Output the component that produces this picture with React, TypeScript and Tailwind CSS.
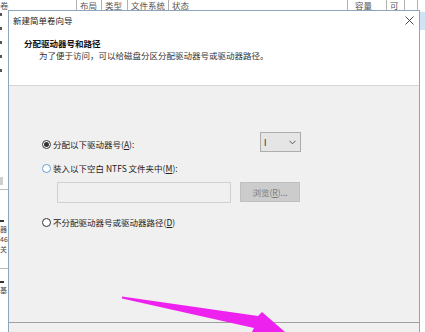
import React from "react";

const font = { fontFamily: '"Noto Sans CJK SC", "Noto Sans", sans-serif' };

function Radio({ checked, blue }: { checked?: boolean; blue?: boolean }) {
  return (
    <span
      className={`flex h-[9px] w-[9px] shrink-0 items-center justify-center rounded-full border bg-white ${
        blue ? "border-[#5ea0d8]" : "border-[#333333]"
      }`}
    >
      {checked && <span className="h-[5px] w-[5px] rounded-full bg-[#333333]" />}
    </span>
  );
}

function HeaderCell({ w, children, last }: { w: string; children?: React.ReactNode; last?: boolean }) {
  return (
    <div className={`${w} flex h-full shrink-0 items-center ${last ? "" : "border-r border-[#b0b0b0]"} pl-[3px] overflow-hidden whitespace-nowrap`}>
      {children}
    </div>
  );
}

export default function App() {
  return (
    <div
      className="relative flex h-[332px] w-[425px] flex-col overflow-hidden bg-white text-[8.5px] leading-[12px] text-[#222]"
      style={font}
    >
      {/* Underlying column header row */}
      <div className="flex h-[10px] shrink-0 bg-white text-[8.5px] leading-[10px] text-[#555]">
        <HeaderCell w="w-[77px]">
          <span className="-ml-[3px]">卷</span>
        </HeaderCell>
        <HeaderCell w="w-[25px]">布局</HeaderCell>
        <HeaderCell w="w-[26px]">类型</HeaderCell>
        <HeaderCell w="w-[41px]">文件系统</HeaderCell>
        <HeaderCell w="w-[179px]">状态</HeaderCell>
        <HeaderCell w="w-[39px]">
          <span className="pl-[4px]">容量</span>
        </HeaderCell>
        <HeaderCell w="w-[18px]">可</HeaderCell>
        <HeaderCell w="w-[13px]"></HeaderCell>
        <HeaderCell w="w-[7px]" last></HeaderCell>
      </div>

      <div className="flex min-h-0 flex-1">
        {/* left strip of underlying window */}
        <div className="flex w-[8px] shrink-0 flex-col bg-white text-[7px] leading-[10px] text-[#444]">
          <div className="mt-[3px] h-[3px] w-[2px] bg-[#555]" />
          <div className="mt-[11px] h-[3px] w-[2px] bg-[#555]" />
          <div className="mt-[11px] h-[3px] w-[2px] bg-[#555]" />
          <div className="mt-[11px] h-[3px] w-[2px] bg-[#555]" />
          <div className="mt-[11px] h-[3px] w-[2px] bg-[#555]" />
          <div className="mt-[105px] h-[8px] w-[3px] bg-[#cfcfcf]" />
          <div className="mt-[4px] h-px w-full bg-[#bbb]" />
          <div className="mt-[30px] h-[2px] w-[4px] bg-[#333]" />
          <div className="mt-[2px] overflow-hidden whitespace-nowrap">器</div>
          <div className="overflow-hidden whitespace-nowrap">46</div>
          <div className="overflow-hidden whitespace-nowrap">关</div>
          <div className="mt-[14px] h-px w-full bg-[#bbb]" />
          <div className="mt-[12px] h-[2px] w-[4px] bg-[#333]" />
          <div className="mt-[2px] overflow-hidden whitespace-nowrap">基</div>
        </div>

        {/* Dialog */}
        <div className="flex h-[340px] w-[412px] shrink-0 flex-col border border-[#8ea6bd] bg-[#f0f0f0]">
          {/* white header */}
          <div className="flex h-[75px] shrink-0 flex-col border-b border-[#d5d5d5] bg-white">
            <div className="flex h-[12px] items-center pl-[4px] pr-[5px] mt-[3px]">
              <span className="flex-1">新建简单卷向导</span>
              <svg width="9" height="9" viewBox="0 0 9 9" className="mr-[0px]">
                <path d="M0.5 0.5 L8.5 8.5 M8.5 0.5 L0.5 8.5" stroke="#333" strokeWidth="0.9" />
              </svg>
            </div>
            <div className="mt-[11px] pl-[15px] font-bold text-[#111]">分配驱动器号和路径</div>
            <div className="pl-[30px] text-[#333]">为了便于访问，可以给磁盘分区分配驱动器号或驱动器路径。</div>
          </div>

          {/* body */}
          <div className="flex h-[237px] shrink-0 flex-col border-b border-[#a0a0a0] pl-[33px]">
            <div className="mt-[46px] flex h-[20px] items-start">
              <div className="flex w-[218px] items-center gap-[2px] pt-[6px]">
                <Radio checked />
                <span>
                  分配以下驱动器号(<span className="underline">A</span>):
                </span>
              </div>
              <div className="flex h-[20px] w-[41px] items-center border border-[#adadad] bg-[#e5e5e5] pl-[3px] pr-[4px]">
                <span className="flex-1">I</span>
                <svg width="7" height="5" viewBox="0 0 7 5">
                  <path d="M0.5 0.8 L3.5 3.8 L6.5 0.8" stroke="#444" strokeWidth="0.9" fill="none" />
                </svg>
              </div>
            </div>
            <div className="mt-[9px] flex h-[14px] items-center gap-[2px]">
              <Radio blue />
              <span>
                装入以下空白 NTFS 文件夹中(<span className="underline">M</span>):
              </span>
            </div>
            <div className="ml-[15px] mt-[7px] flex h-[21px] gap-[9px]">
              <div className="h-full w-[174px] border border-[#d0d0d0] bg-[#f0f0f0]" />
              <div className="flex h-[20px] w-[60px] items-center justify-center border border-[#bfbfbf] bg-[#cccccc] text-[#7a7a7a]">
                浏览(<span className="underline">R</span>)...
              </div>
            </div>
            <div className="mt-[12px] flex h-[14px] items-center gap-[2px]">
              <Radio />
              <span>
                不分配驱动器号或驱动器路径(<span className="underline">D</span>)
              </span>
            </div>
          </div>
          <div className="flex-1 bg-[#f0f0f0]" />
        </div>

        {/* right strip */}
        <div className="flex flex-1 flex-col bg-white">
          <div className="mt-[2px] h-[18px] w-full bg-[#cfe3f5]" />
        </div>
      </div>

      {/* magenta annotation arrow */}
      <svg className="pointer-events-none absolute inset-0" width="425" height="332" viewBox="0 0 425 332">
        <polygon
          points="122,296.5 258,316 262,312 300,345 245,345 254,328 122,298.5"
          fill="#ee22ee"
        />
      </svg>
    </div>
  );
}
